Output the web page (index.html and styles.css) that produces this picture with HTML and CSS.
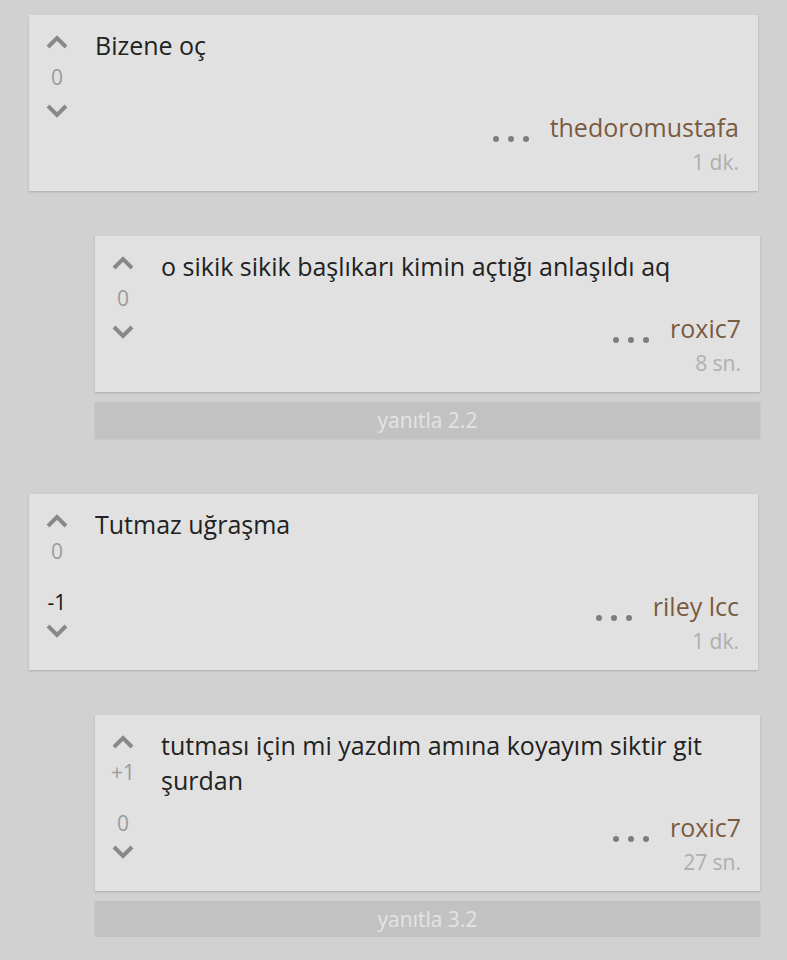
FILE: index.html
```html
<!DOCTYPE html>
<html>
<head>
    <title>Yorumlar</title>
    <link rel="stylesheet" href="styles.css">
</head>
<body>
<div class="page">

    <div class="thread">
        <div class="card">
            <div class="votes">
                <svg class="arrow" viewBox="0 0 22 14"><path d="M2 12 L11 3 L20 12"/></svg>
                <span class="score">0</span>
                <svg class="arrow down" viewBox="0 0 22 14"><path d="M2 2 L11 11 L20 2"/></svg>
            </div>
            <div class="body">
                <p class="text">Bizene oç</p>
                <div class="meta">
                    <div class="byline">
                        <span class="dots"><i></i><i></i><i></i></span>
                        <span class="author">thedoromustafa</span>
                    </div>
                    <div class="time">1 dk.</div>
                </div>
            </div>
        </div>

        <div class="reply">
            <div class="card short">
                <div class="votes">
                    <svg class="arrow" viewBox="0 0 22 14"><path d="M2 12 L11 3 L20 12"/></svg>
                    <span class="score">0</span>
                    <svg class="arrow down" viewBox="0 0 22 14"><path d="M2 2 L11 11 L20 2"/></svg>
                </div>
                <div class="body">
                    <p class="text">o sikik sikik başlıkarı kimin açtığı anlaşıldı aq</p>
                    <div class="meta">
                        <div class="byline">
                            <span class="dots"><i></i><i></i><i></i></span>
                            <span class="author">roxic7</span>
                        </div>
                        <div class="time">8 sn.</div>
                    </div>
                </div>
            </div>
            <div class="reply-bar">yanıtla 2.2</div>
        </div>
    </div>

    <div class="thread">
        <div class="card">
            <div class="votes split">
                <svg class="arrow" viewBox="0 0 22 14"><path d="M2 12 L11 3 L20 12"/></svg>
                <span class="score">0</span>
                <span class="score mine">-1</span>
                <svg class="arrow down" viewBox="0 0 22 14"><path d="M2 2 L11 11 L20 2"/></svg>
            </div>
            <div class="body">
                <p class="text">Tutmaz uğraşma</p>
                <div class="meta">
                    <div class="byline">
                        <span class="dots"><i></i><i></i><i></i></span>
                        <span class="author">riley lcc</span>
                    </div>
                    <div class="time">1 dk.</div>
                </div>
            </div>
        </div>

        <div class="reply">
            <div class="card">
                <div class="votes split">
                    <svg class="arrow" viewBox="0 0 22 14"><path d="M2 12 L11 3 L20 12"/></svg>
                    <span class="score">+1</span>
                    <span class="score">0</span>
                    <svg class="arrow down" viewBox="0 0 22 14"><path d="M2 2 L11 11 L20 2"/></svg>
                </div>
                <div class="body">
                    <p class="text">tutması için mi yazdım amına koyayım siktir git şurdan</p>
                    <div class="meta">
                        <div class="byline">
                            <span class="dots"><i></i><i></i><i></i></span>
                            <span class="author">roxic7</span>
                        </div>
                        <div class="time">27 sn.</div>
                    </div>
                </div>
            </div>
            <div class="reply-bar">yanıtla 3.2</div>
        </div>
    </div>

</div>
</body>
</html>
```

FILE: styles.css
```css
body {
    margin: 0;
    background-color: #d1d1d1;
    font-family: "Open Sans", "Noto Sans", sans-serif;
}

.page {
    padding: 15px 29px 0 29px;
}

.thread + .thread {
    margin-top: 56px;
}

.card {
    display: flex;
    box-sizing: border-box;
    min-height: 176px;
    padding: 13px 19px 11px 8px;
    background-color: #e1e1e1;
    box-shadow: 0 1px 2px rgba(0, 0, 0, 0.18);
}

.card.short {
    min-height: 156px;
}

.votes {
    display: flex;
    flex-direction: column;
    align-items: center;
    width: 40px;
    flex-shrink: 0;
}

.arrow {
    display: block;
    width: 22px;
    height: 14px;
    margin-top: 7px;
    fill: none;
    stroke: #888;
    stroke-width: 4;
}

.score {
    margin-top: 13px;
    font-size: 21px;
    line-height: 30px;
    color: #9b9b9b;
}

.votes .down {
    margin-top: 12px;
}

.votes.split .score {
    margin-top: 8px;
}

.votes.split .score + .score {
    margin-top: 21px;
}

.votes.split .down {
    margin-top: 7px;
}

.score.mine {
    color: #111;
}

.body {
    flex: 1;
    display: flex;
    flex-direction: column;
    margin-left: 18px;
}

.text {
    margin: 0;
    font-size: 25px;
    line-height: 35px;
    color: #222;
}

.meta {
    margin-top: auto;
    text-align: right;
}

.byline {
    display: flex;
    justify-content: flex-end;
}

.dots {
    display: flex;
    gap: 9px;
    align-self: flex-end;
    margin: 0 21px 3px 0;
}

.dots i {
    width: 6px;
    height: 6px;
    border-radius: 50%;
    background-color: #7d7d7d;
}

.author {
    font-size: 25px;
    line-height: 35px;
    color: #7a5b3f;
}

.time {
    font-size: 21px;
    line-height: 35px;
    color: #afafaf;
}

.reply {
    margin: 45px -2px 0 66px;
}

.reply-bar {
    margin-top: 10px;
    height: 36px;
    line-height: 36px;
    text-align: center;
    font-size: 21px;
    color: #e4e4e4;
    background-color: #c2c2c2;
    box-shadow: 0 1px 2px rgba(0, 0, 0, 0.1);
}
```
